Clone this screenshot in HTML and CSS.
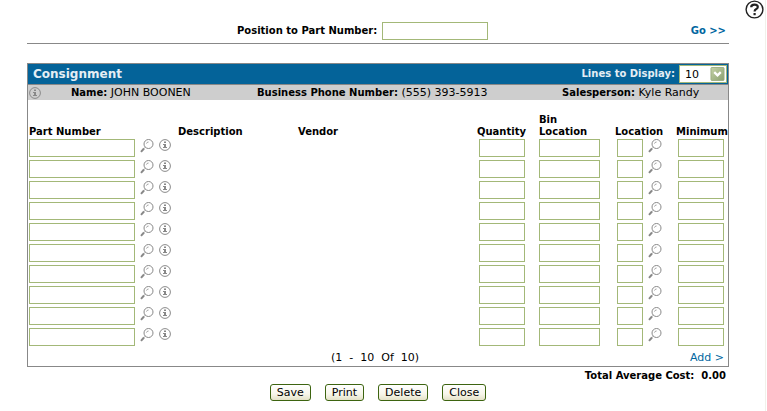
FILE: index.html
```
<!DOCTYPE html>
<html lang="en">
<head>
  <meta charset="UTF-8">
  <meta name="viewport" content="width=device-width, initial-scale=1.0">
  <title>Consignment</title>
  <link rel="stylesheet" href="styles.css">
</head>
<body>
  <svg class="symbols" aria-hidden="true">
    <symbol id="icon-search" viewBox="0 0 14 14">
      <circle cx="8.5" cy="5" r="4.5" fill="#fff" stroke="#888" stroke-width="1"/>
      <path d="M6.5 4.5Q7 3 8.5 3" fill="none" stroke="#999" stroke-width="1"/>
      <path d="M5.2 8.3L3.8 9.7" stroke="#888" stroke-width="1"/>
      <path d="M4 9.5L1 12.8" stroke="#888" stroke-width="2"/>
    </symbol>
    <symbol id="icon-info" viewBox="0 0 12 12">
      <circle cx="6" cy="6" r="5.4" fill="none" stroke="#8a8a8a" stroke-width="1"/>
      <path d="M5 2.5h2v1.5h-2zM4 5h3v3h1v1h-4v-1h1v-2h-1z" fill="#888"/>
    </symbol>
  </svg>

  <div class="page">
    <main>
      <form class="position">
        <div class="position-field">
          <label for="positionTo">Position to Part Number:</label>
          <input type="text" id="positionTo">
        </div>
        <a href="#" class="go">Go &gt;&gt;</a>
      </form>

      <section class="panel">
        <div class="title-bar">
          <h1>Consignment</h1>
          <div class="lines">
            <label for="lines">Lines to Display:</label>
            <span class="select-box">
              <select id="lines">
                <option>10</option>
                <option>20</option>
                <option>50</option>
              </select>
              <svg class="arrow" viewBox="0 0 15 15" aria-hidden="true">
                <defs>
                  <linearGradient id="arrowFill" x1="0" y1="0" x2="1" y2="1">
                    <stop offset="0" stop-color="#c6d3a8"/>
                    <stop offset="1" stop-color="#8aa070"/>
                  </linearGradient>
                </defs>
                <rect x="0.5" y="0.5" width="14" height="14" rx="1" fill="url(#arrowFill)" stroke="#9aac80"/>
                <path d="M4 5.5L7.5 9L11 5.5" fill="none" stroke="#fff" stroke-width="2.4"/>
              </svg>
            </span>
          </div>
        </div>

        <div class="customer">
          <a href="#" class="icon-link" aria-label="Customer information"><svg class="info"><use href="#icon-info"/></svg></a>
          <span class="name"><b>Name:</b> JOHN BOONEN</span>
          <span class="phone"><b>Business Phone Number:</b> (555) 393-5913</span>
          <span class="sales"><b>Salesperson:</b> Kyle Randy</span>
        </div>

        <table class="parts">
          <thead>
            <tr>
              <th class="col-part">Part Number</th>
              <th class="col-icons"></th>
              <th class="col-desc">Description</th>
              <th class="col-vendor">Vendor</th>
              <th class="col-qty">Quantity</th>
              <th class="col-bin">Bin<br>Location</th>
              <th class="col-loc">Location</th>
              <th class="col-min">Minimum</th>
            </tr>
          </thead>
          <tbody id="partRows"></tbody>
        </table>

        <div class="panel-foot">
          <span class="count">(1&nbsp; -&nbsp; 10&nbsp; Of&nbsp; 10)</span>
          <a href="#" class="add">Add &gt;</a>
        </div>
      </section>

      <div class="total">Total Average Cost:&nbsp; 0.00</div>

      <div class="actions">
        <button type="button">Save</button>
        <button type="button">Print</button>
        <button type="button">Delete</button>
        <button type="button">Close</button>
      </div>
    </main>

    <aside>
      <a href="#" class="help" aria-label="Help">
        <svg viewBox="0 0 19 19">
          <circle cx="9.5" cy="9.5" r="8.4" fill="#fff" stroke="#222" stroke-width="1.4"/>
          <path d="M6.2 7.2Q6.2 4.6 9.5 4.6Q12.8 4.6 12.8 7Q12.8 8.4 11 9.2Q9.6 9.8 9.6 11.6" fill="none" stroke="#222" stroke-width="2.2"/>
          <rect x="8.5" y="13" width="2.2" height="2.2" fill="#222"/>
        </svg>
      </a>
    </aside>
  </div>

  <script>
    (function() {
      const search = '<a href="#" class="icon-link" aria-label="Search"><svg class="search"><use href="#icon-search"/></svg></a>';
      const info = '<a href="#" class="icon-link" aria-label="Information"><svg class="info"><use href="#icon-info"/></svg></a>';
      let rows = '';
      for (let i = 1; i <= 10; i++) {
        rows += '<tr>' +
          '<td><input type="text" class="part" aria-label="Part Number ' + i + '"></td>' +
          '<td><div class="icons">' + search + info + '</div></td>' +
          '<td></td><td></td>' +
          '<td class="inset"><input type="text" class="short" aria-label="Quantity ' + i + '"></td>' +
          '<td><input type="text" class="bin" aria-label="Bin Location ' + i + '"></td>' +
          '<td class="inset"><div class="loc"><input type="text" class="tiny" aria-label="Location ' + i + '">' + search + '</div></td>' +
          '<td class="inset"><input type="text" class="short" aria-label="Minimum ' + i + '"></td>' +
          '</tr>';
      }
      document.getElementById('partRows').innerHTML = rows;
    })();
  </script>
</body>
</html>
```
FILE: styles.css
```
/* Base */
* {
  box-sizing: border-box;
}
body {
  margin: 0;
  font-family: Verdana, 'DejaVu Sans', sans-serif;
  font-size: 11px;
  line-height: 12px;
  color: #000;
  background: #fff;
}
a {
  color: #0066a0;
  text-decoration: none;
}
b, th {
  font-size: 10px;
}
svg {
  display: block;
}
.symbols {
  display: none;
}
.page {
  display: flex;
  min-height: 100vh;
  margin-right: 1px;
  border-right: 1px solid #f1f1ea;
}
main {
  flex: 1;
  padding: 22px 16px 8px 27px;
}
aside {
  width: 20px;
}
.help svg {
  width: 19px;
  height: 19px;
}
input {
  display: block;
  height: 18px;
  margin: 0;
  padding: 0 3px;
  border: 1px solid #a3b878;
  background: #fff;
  font: inherit;
}

/* Position to */
.position {
  display: flex;
  align-items: center;
  padding: 0 3px 3px 210px;
  border-bottom: 1px solid #888;
  font-size: 10px;
  font-weight: bold;
}
.position-field {
  display: flex;
  flex: 1;
  align-items: center;
  gap: 5px;
}
.position-field input {
  width: 106px;
}

/* Panel */
.panel {
  margin-top: 19px;
  border: 1px solid #888;
}
.title-bar {
  display: flex;
  justify-content: space-between;
  align-items: center;
  height: 21px;
  padding: 0 1px 0 5px;
  border-bottom: 1px solid #888;
  background: #046399;
  color: #e4eef4;
}
h1 {
  margin: 0;
  font-size: 12px;
}
.lines {
  display: flex;
  align-items: center;
  gap: 4px;
  font-size: 10px;
  font-weight: bold;
}
.select-box {
  position: relative;
}
select {
  display: block;
  appearance: none;
  width: 48px;
  height: 18px;
  margin: 0;
  padding: 0 0 0 5px;
  border: 1px solid #a3b878;
  border-radius: 0;
  background: #fff;
  color: #000;
  font: 11px Verdana, 'DejaVu Sans', sans-serif;
}
.arrow {
  position: absolute;
  top: 2px;
  right: 2px;
  width: 15px;
  height: 14px;
  pointer-events: none;
}
.customer {
  display: grid;
  grid-template-columns: 42px 186px 1fr 166px;
  align-items: center;
  height: 15px;
  padding-left: 1px;
  background: #cecece;
  white-space: nowrap;
}
.search {
  width: 14px;
  height: 14px;
}
.info {
  width: 12px;
  height: 12px;
}

/* Parts table */
.parts {
  width: 100%;
  margin-top: 14px;
  border-collapse: collapse;
  table-layout: fixed;
}
th {
  padding: 0 0 1px 1px;
  text-align: left;
  vertical-align: bottom;
}
td {
  height: 21px;
  padding: 0 0 0 1px;
  vertical-align: top;
}
td.inset {
  padding-left: 3px;
}
.col-part { width: 111px; }
.col-icons { width: 38px; }
.col-desc { width: 120px; }
.col-qty { width: 62px; }
.col-bin { width: 76px; }
.col-loc { width: 61px; }
.col-min { width: 53px; }
.part { width: 106px; }
.short { width: 46px; }
.bin { width: 61px; }
.tiny { width: 26px; }
.icons {
  display: flex;
  gap: 5px;
}
.loc {
  display: flex;
  gap: 5px;
}
.panel-foot {
  display: flex;
  align-items: center;
  justify-content: center;
  height: 17px;
}
.count {
  flex: 1;
  padding-left: 303px;
}
.add {
  padding-right: 4px;
}
.total {
  padding: 3px 3px 0 0;
  font-size: 10px;
  font-weight: bold;
  text-align: right;
}

/* Buttons */
.actions {
  display: flex;
  justify-content: center;
  gap: 14px;
  padding-top: 2px;
}
button {
  height: 17px;
  margin: 0;
  padding: 0 6px;
  border: 1px solid #3d6410;
  border-radius: 3px;
  background: linear-gradient(#fff, #f7f6ea 60%, #e4e2c8);
  color: #000;
  font: 11px Verdana, 'DejaVu Sans', sans-serif;
}
```
